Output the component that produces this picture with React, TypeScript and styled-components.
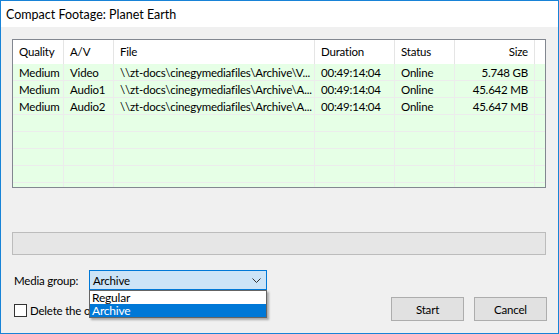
import React from 'react';
import styled, { createGlobalStyle } from 'styled-components';

const GlobalStyle = createGlobalStyle`
  html, body {
    margin: 0;
    padding: 0;
    background: #f0f0f0;
  }
  * {
    box-sizing: border-box;
  }
`;

type Clip = {
  quality: string;
  av: string;
  file: string;
  duration: string;
  status: string;
  size: string;
};

const clips: Clip[] = [
  { quality: 'Medium', av: 'Video', file: '\\\\zt-docs\\cinegymediafiles\\Archive\\V...', duration: '00:49:14:04', status: 'Online', size: '5.748 GB' },
  { quality: 'Medium', av: 'Audio1', file: '\\\\zt-docs\\cinegymediafiles\\Archive\\A...', duration: '00:49:14:04', status: 'Online', size: '45.642 MB' },
  { quality: 'Medium', av: 'Audio2', file: '\\\\zt-docs\\cinegymediafiles\\Archive\\A...', duration: '00:49:14:04', status: 'Online', size: '45.647 MB' },
];

const columns = [
  { title: 'Quality', width: 51, key: 'quality' },
  { title: 'A/V', width: 50, key: 'av' },
  { title: 'File', width: 201, key: 'file' },
  { title: 'Duration', width: 80, key: 'duration' },
  { title: 'Status', width: 60, key: 'status' },
  { title: 'Size', width: 80, key: 'size', right: true },
] as const;

const EMPTY_ROWS = 5;

const App: React.FC = () => {
  return (
    <>
      <GlobalStyle />
      <Window>
        <TitleBar>Compact Footage: Planet Earth</TitleBar>
        <Body>
          <ListBox>
            <HeaderRow>
              {columns.map((c) => (
                <HeaderCell key={c.key} $width={c.width} $right={'right' in c}>
                  {c.title}
                </HeaderCell>
              ))}
              <HeaderFiller />
            </HeaderRow>
            {clips.map((clip, i) => (
              <Row key={i}>
                {columns.map((c) => (
                  <Cell key={c.key} $width={c.width} $right={'right' in c}>
                    {clip[c.key]}
                  </Cell>
                ))}
                <Filler />
              </Row>
            ))}
            {Array.from({ length: EMPTY_ROWS }).map((_, i) => (
              <Row key={`e${i}`}>
                {columns.map((c) => (
                  <Cell key={c.key} $width={c.width} />
                ))}
                <Filler />
              </Row>
            ))}
          </ListBox>

          <Progress />

          <MediaRow>
            <FieldLabel>Media group:</FieldLabel>
            <ComboWrap>
              <Combo>
                <span>Archive</span>
                <svg width="9" height="5" viewBox="0 0 9 5">
                  <polyline points="0.5,0.5 4.5,4.5 8.5,0.5" fill="none" stroke="#333" strokeWidth="1" />
                </svg>
              </Combo>
              <DropList>
                <DropItem>Regular</DropItem>
                <DropItem $selected>Archive</DropItem>
              </DropList>
            </ComboWrap>
          </MediaRow>

          <BottomRow>
            <CheckLabel>
              <CheckBox />
              Delete the original clips
            </CheckLabel>
            <Buttons>
              <Button>Start</Button>
              <Button>Cancel</Button>
            </Buttons>
          </BottomRow>
        </Body>
      </Window>
    </>
  );
};

const Window = styled.div`
  width: 559px;
  height: 334px;
  border: 1px solid #1883d7;
  background: #f0f0f0;
  display: flex;
  flex-direction: column;
  font-family: Lato, 'Noto Sans', sans-serif;
  font-size: 11.5px;
  letter-spacing: -0.2px;
  color: #000;
  overflow: hidden;
`;

const TitleBar = styled.div`
  height: 26px;
  background: #fff;
  display: flex;
  align-items: center;
  padding-left: 5px;
  font-size: 12.5px;
  letter-spacing: 0;
  flex-shrink: 0;
`;

const Body = styled.div`
  flex: 1;
  display: flex;
  flex-direction: column;
  padding: 12px 12px 0 11px;
`;

const ListBox = styled.div`
  height: 149px;
  border: 1px solid #828790;
  background: #e6ffe6;
  overflow: hidden;
`;

const HeaderRow = styled.div`
  display: flex;
  height: 24px;
  background: #fff;
`;

const HeaderCell = styled.div<{ $width: number; $right?: boolean }>`
  width: ${(p) => p.$width}px;
  flex-shrink: 0;
  border-right: 1px solid #e5e5e5;
  display: flex;
  align-items: center;
  justify-content: ${(p) => (p.$right ? 'flex-end' : 'flex-start')};
  padding: 0 6px 1px 6px;
  white-space: nowrap;
`;

const HeaderFiller = styled.div`
  flex: 1;
`;

const Row = styled.div`
  display: flex;
  height: 17px;
  border-bottom: 1px solid #ececec;
`;

const Cell = styled.div<{ $width: number; $right?: boolean }>`
  width: ${(p) => p.$width}px;
  flex-shrink: 0;
  border-right: 1px solid #ececec;
  display: flex;
  align-items: center;
  justify-content: ${(p) => (p.$right ? 'flex-end' : 'flex-start')};
  padding: 0 6px;
  white-space: nowrap;
  overflow: hidden;
`;

const Filler = styled.div`
  flex: 1;
`;

const Progress = styled.div`
  margin-top: 44px;
  height: 23px;
  border: 1px solid #bcbcbc;
  background: #e6e6e6;
`;

const MediaRow = styled.div`
  margin-top: 15px;
  display: flex;
  align-items: center;
  height: 20px;
`;

const FieldLabel = styled.div`
  width: 77px;
  padding-left: 2px;
`;

const ComboWrap = styled.div`
  position: relative;
  width: 178px;
  height: 20px;
`;

const Combo = styled.div`
  height: 100%;
  border: 1px solid #0078d7;
  background: #cce4f7;
  display: flex;
  align-items: center;
  justify-content: space-between;
  padding: 0 5px 0 3px;
`;

const DropList = styled.div`
  position: absolute;
  top: 20px;
  left: 0;
  width: 178px;
  background: #fff;
  border: 1px solid #646464;
  box-shadow: 2px 2px 2px rgba(0, 0, 0, 0.3);
  z-index: 2;
`;

const DropItem = styled.div<{ $selected?: boolean }>`
  height: 13px;
  line-height: 13px;
  padding-left: 2px;
  font-size: 12px;
  background: ${(p) => (p.$selected ? '#0078d7' : '#fff')};
  color: ${(p) => (p.$selected ? '#fff' : '#000')};
`;

const BottomRow = styled.div`
  margin-top: 7px;
  display: flex;
  justify-content: space-between;
  align-items: center;
  height: 24px;
`;

const CheckLabel = styled.div`
  display: flex;
  align-items: center;
  gap: 3px;
  padding-left: 2px;
  margin-top: 2px;
  white-space: nowrap;
`;

const CheckBox = styled.span`
  width: 13px;
  height: 13px;
  border: 1px solid #333;
  background: #fff;
  flex-shrink: 0;
`;

const Buttons = styled.div`
  display: flex;
  gap: 10px;
  margin-right: -1px;
`;

const Button = styled.button`
  width: 73px;
  height: 24px;
  background: #e1e1e1;
  border: 1px solid #adadad;
  font-family: inherit;
  font-size: 11.5px;
  letter-spacing: -0.2px;
  color: #000;
  padding: 0;
`;

export default App;
